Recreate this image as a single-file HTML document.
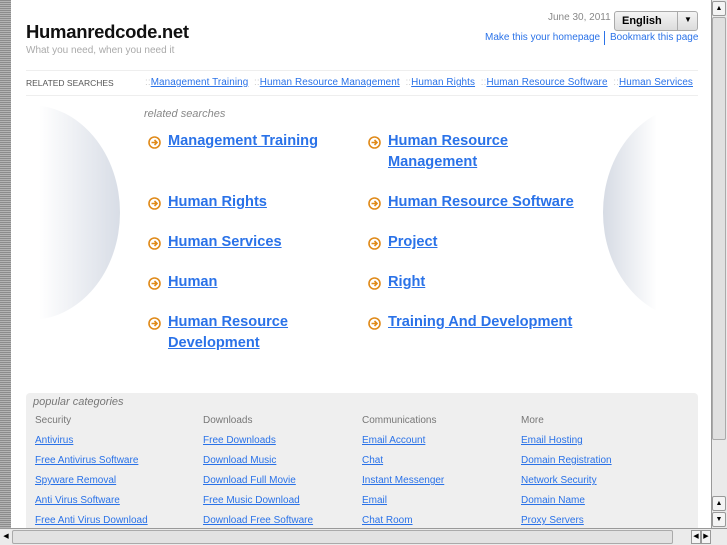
<!DOCTYPE html>
<html><head><style>
*{margin:0;padding:0;box-sizing:border-box}
body{width:727px;height:545px;overflow:hidden;background:#fff;font-family:"Liberation Sans",sans-serif;position:relative}
a{color:#2a72e8;text-decoration:underline}
.abs{position:absolute}
.stripe{left:0;top:0;width:11px;height:528px;background:repeating-linear-gradient(#8c8c8c 0 1px,#b4b4b4 1px 2px);z-index:5}
.clipL{left:33px;top:100px;width:100px;height:230px;overflow:hidden}
.circL{left:-93px;top:5px;width:180px;height:215px;border-radius:50%;background:linear-gradient(90deg,#fff 55%,#d8dde6 100%)}
.circR{left:603px;top:105px;width:180px;height:215px;border-radius:50%;background:linear-gradient(90deg,#d6dbe4 0%,#fff 30%)}
.big a{font-size:14.6px;font-weight:bold;line-height:21px}
.arrow{width:13px;height:13px}
.pc{font-size:10px}
.pc a{position:absolute}
</style></head><body>
<div class="abs stripe"></div>
<div class="abs clipL"><div class="abs circL"></div></div>
<div class="abs circR"></div>
<div class="abs" style="left:693px;top:100px;width:18px;height:240px;background:#fff"></div>

<div class="abs" style="left:26px;top:21px;font-size:18.5px;font-weight:bold;color:#111;letter-spacing:-0.3px">Humanredcode.net</div>
<div class="abs" style="left:26px;top:45px;font-size:10px;color:#aaa">What you need, when you need it</div>
<div class="abs" style="left:548px;top:12px;font-size:10px;color:#888">June 30, 2011</div>
<div class="abs" style="left:614px;top:11px;width:84px;height:20px;border:1px solid #aaa;border-radius:3px;background:linear-gradient(#f4f4f4,#dcdcdc);font-size:11px;font-weight:bold;padding:3px 0 0 7px">English<span style="position:absolute;left:62px;top:0;width:1px;height:18px;background:#aaa"></span><span style="position:absolute;left:69px;top:3px;font-size:8px">▼</span></div>
<div class="abs" style="left:485px;top:32px;font-size:10px"><a style="text-decoration:none">Make this your homepage</a></div>
<div class="abs" style="left:604px;top:31px;width:1px;height:14px;background:#2a72e8"></div>
<div class="abs" style="left:610px;top:32px;font-size:10px"><a style="text-decoration:none">Bookmark this page</a></div>

<div class="abs" style="left:26px;top:70px;width:672px;height:1px;background:#eee"></div>
<div class="abs" style="left:26px;top:78px;font-size:8.5px;color:#555">RELATED SEARCHES</div>
<div class="abs" style="left:145px;top:77px;font-size:9.9px;letter-spacing:0.11px;color:#ccc;white-space:nowrap">::<a>Management Training</a> &nbsp;::<a>Human Resource Management</a> &nbsp;::<a>Human Rights</a> &nbsp;::<a>Human Resource Software</a> &nbsp;::<a>Human Services</a></div>
<div class="abs" style="left:26px;top:95px;width:672px;height:1px;background:#eee"></div>

<svg width="0" height="0" style="position:absolute"><defs><g id="ar"><circle cx="6.5" cy="6.5" r="5.5" fill="#fff" stroke="#e08a1a" stroke-width="1.6"/><path d="M3.5 6.5H9M6.5 4L9 6.5 6.5 9" fill="none" stroke="#e08a1a" stroke-width="1.6"/></g></defs></svg>
<div class="abs" style="left:144px;top:108px;font-size:11px;font-style:italic;color:#888">related searches</div>
<div class="big">
<svg class="abs arrow" style="left:148px;top:136px"><use href="#ar"/></svg><div class="abs" style="left:168px;top:131px"><a>Management Training</a></div>
<svg class="abs arrow" style="left:368px;top:136px"><use href="#ar"/></svg><div class="abs" style="left:388px;top:131px;width:160px"><a>Human Resource Management</a></div>
<svg class="abs arrow" style="left:148px;top:197px"><use href="#ar"/></svg><div class="abs" style="left:168px;top:192px"><a>Human Rights</a></div>
<svg class="abs arrow" style="left:368px;top:197px"><use href="#ar"/></svg><div class="abs" style="left:388px;top:192px"><a>Human Resource Software</a></div>
<svg class="abs arrow" style="left:148px;top:237px"><use href="#ar"/></svg><div class="abs" style="left:168px;top:232px"><a>Human Services</a></div>
<svg class="abs arrow" style="left:368px;top:237px"><use href="#ar"/></svg><div class="abs" style="left:388px;top:232px"><a>Project</a></div>
<svg class="abs arrow" style="left:148px;top:277px"><use href="#ar"/></svg><div class="abs" style="left:168px;top:272px"><a>Human</a></div>
<svg class="abs arrow" style="left:368px;top:277px"><use href="#ar"/></svg><div class="abs" style="left:388px;top:272px"><a>Right</a></div>
<svg class="abs arrow" style="left:148px;top:317px"><use href="#ar"/></svg><div class="abs" style="left:168px;top:312px;width:150px"><a>Human Resource Development</a></div>
<svg class="abs arrow" style="left:368px;top:317px"><use href="#ar"/></svg><div class="abs" style="left:388px;top:312px"><a>Training And Development</a></div>
</div>

<div class="abs pc" style="left:26px;top:393px;width:672px;height:140px;background:#efefef;border-radius:4px">
<div class="abs" style="left:7px;top:3px;font-size:11px;font-style:italic;color:#777">popular categories</div>
<div class="abs" style="left:9px;top:22px;color:#777">Security</div>
<div class="abs" style="left:177px;top:22px;color:#777">Downloads</div>
<div class="abs" style="left:336px;top:22px;color:#777">Communications</div>
<div class="abs" style="left:495px;top:22px;color:#777">More</div>
<a style="left:9px;top:42px">Antivirus</a><a style="left:9px;top:62px">Free Antivirus Software</a><a style="left:9px;top:82px">Spyware Removal</a><a style="left:9px;top:102px">Anti Virus Software</a><a style="left:9px;top:122px">Free Anti Virus Download</a>
<a style="left:177px;top:42px">Free Downloads</a><a style="left:177px;top:62px">Download Music</a><a style="left:177px;top:82px">Download Full Movie</a><a style="left:177px;top:102px">Free Music Download</a><a style="left:177px;top:122px">Download Free Software</a>
<a style="left:336px;top:42px">Email Account</a><a style="left:336px;top:62px">Chat</a><a style="left:336px;top:82px">Instant Messenger</a><a style="left:336px;top:102px">Email</a><a style="left:336px;top:122px">Chat Room</a>
<a style="left:495px;top:42px">Email Hosting</a><a style="left:495px;top:62px">Domain Registration</a><a style="left:495px;top:82px">Network Security</a><a style="left:495px;top:102px">Domain Name</a><a style="left:495px;top:122px">Proxy Servers</a>
</div>

<div class="abs" style="left:711px;top:0;width:16px;height:528px;background:#eaeaea;border-left:1px solid #999"></div>
<div class="abs" style="left:712px;top:1px;width:14px;height:15px;background:#f4f4f4;border:1px solid #999;border-radius:2px;font-size:7px;text-align:center;line-height:13px">▲</div>
<div class="abs" style="left:712px;top:17px;width:14px;height:423px;background:#e0e0e0;border:1px solid #aaa;border-radius:2px"></div>
<div class="abs" style="left:712px;top:496px;width:14px;height:15px;background:#f4f4f4;border:1px solid #999;border-radius:2px;font-size:7px;text-align:center;line-height:13px">▲</div>
<div class="abs" style="left:712px;top:512px;width:14px;height:15px;background:#f4f4f4;border:1px solid #999;border-radius:2px;font-size:7px;text-align:center;line-height:13px">▼</div>
<div class="abs" style="left:0;top:528px;width:727px;height:17px;background:#ebebeb;border-top:1px solid #999;z-index:6"></div>
<div class="abs" style="left:1px;top:530px;width:10px;height:14px;font-size:7px;line-height:14px;text-align:center;z-index:7">◀</div>
<div class="abs" style="left:12px;top:530px;width:661px;height:14px;background:#e2e2e2;border:1px solid #aaa;border-radius:2px;z-index:7"></div>
<div class="abs" style="left:691px;top:530px;width:10px;height:14px;background:#f4f4f4;border:1px solid #999;font-size:7px;line-height:12px;text-align:center;z-index:7">◀</div>
<div class="abs" style="left:701px;top:530px;width:10px;height:14px;background:#f4f4f4;border:1px solid #999;font-size:7px;line-height:12px;text-align:center;z-index:7">▶</div>
</body></html>
